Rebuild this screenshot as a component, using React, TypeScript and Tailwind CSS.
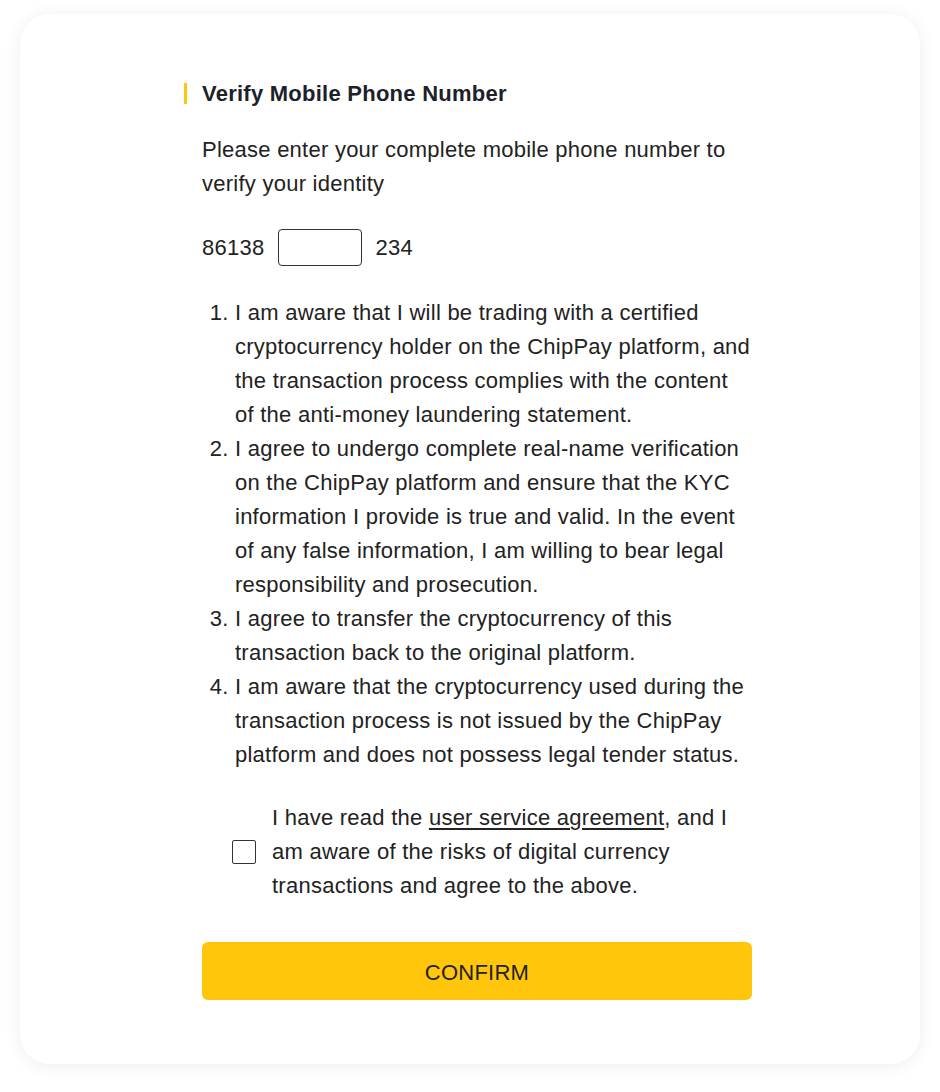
export default function App() {
  const terms = [
    "I am aware that I will be trading with a certified cryptocurrency holder on the ChipPay platform, and the transaction process complies with the content of the anti-money laundering statement.",
    "I agree to undergo complete real-name verification on the ChipPay platform and ensure that the KYC information I provide is true and valid. In the event of any false information, I am willing to bear legal responsibility and prosecution.",
    "I agree to transfer the cryptocurrency of this transaction back to the original platform.",
    "I am aware that the cryptocurrency used during the transaction process is not issued by the ChipPay platform and does not possess legal tender status.",
  ];

  return (
    <div className="min-h-[1092px] bg-white pt-[14px] px-[20px] font-['Liberation_Sans',Arial,sans-serif] tracking-[0.25px] text-[#222]">
      <div className="w-[900px] rounded-[30px] bg-white shadow-[0_2px_18px_rgba(0,0,0,0.07)] pt-[69px] pb-[64px] pl-[182px]">
        <div className="w-[550px]">
          <h2 className="-ml-[18px] border-l-[3px] border-[#FFC60B] pl-[15px] text-[22px] font-bold leading-[21px] text-[#1d2129]">
            Verify Mobile Phone Number
          </h2>

          <p className="mt-[29px] text-[22px] leading-[34px]">
            Please enter your complete mobile phone number to verify your identity
          </p>

          <div className="mt-[28px] flex items-center text-[22px]">
            <span>86138</span>
            <input
              type="text"
              className="ml-[14px] mr-[13px] h-[37px] w-[84px] rounded-[4px] border border-[#333] bg-white outline-none"
            />
            <span>234</span>
          </div>

          <ol className="mt-[30px] list-decimal pl-[33px] text-[22px] leading-[34px]">
            {terms.map((t, i) => (
              <li key={i}>{t}</li>
            ))}
          </ol>

          <label className="mt-[29px] flex items-center gap-[16px] pl-[30px]">
            <span className="h-[24px] w-[24px] shrink-0 rounded-[2px] border-[1.5px] border-[#333] bg-white" />
            <span className="text-[22px] leading-[34px]">
              I have read the <span className="underline underline-offset-[3px]">user service agreement</span>, and I am aware of the risks of digital currency transactions and agree to the above.
            </span>
          </label>

          <button
            type="button"
            className="mt-[39px] h-[58px] w-full rounded-[6px] bg-[#FFC60B] pt-[2px] text-[22px] text-[#222]"
          >
            CONFIRM
          </button>
        </div>
      </div>
    </div>
  );
}
